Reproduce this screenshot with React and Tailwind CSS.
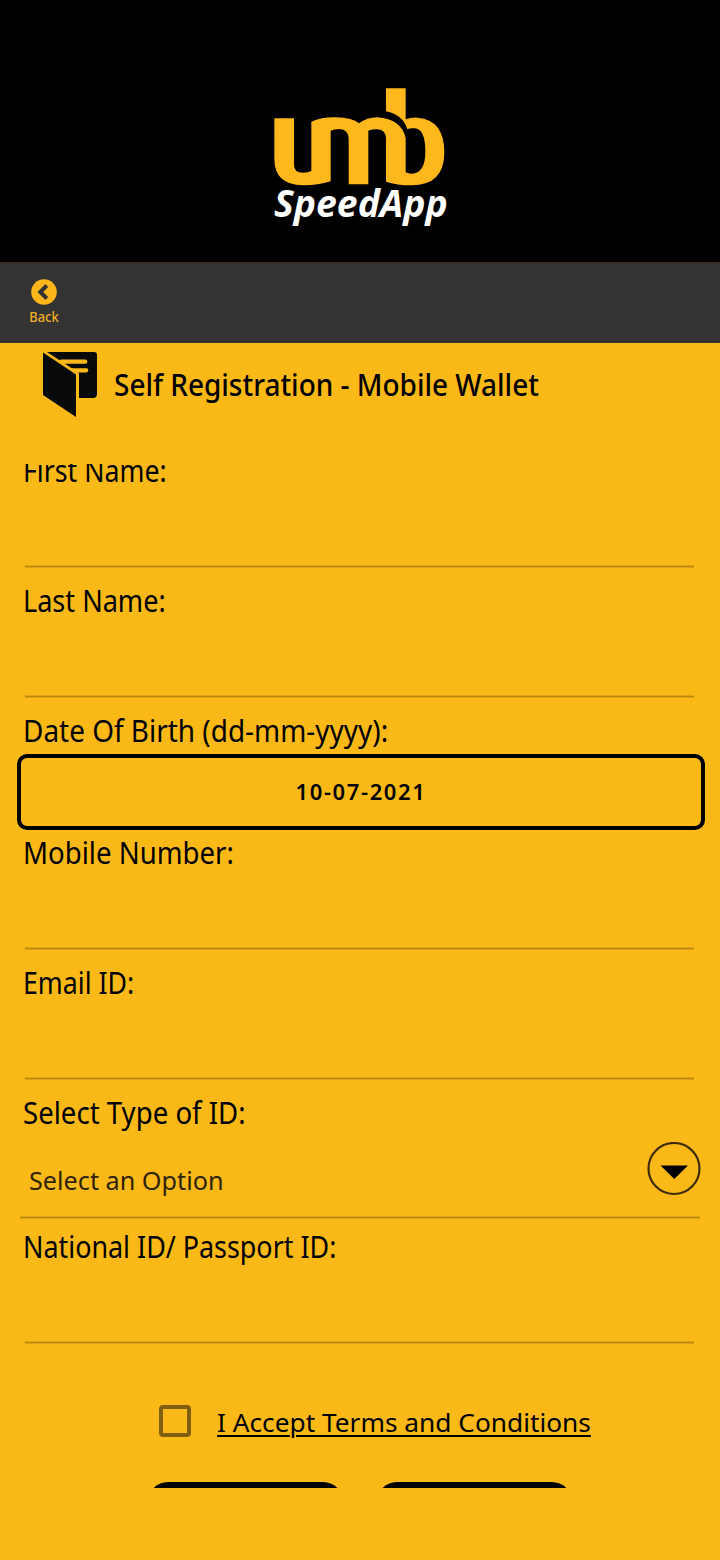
import React from "react";

function Rule({ className = "" }) {
  return <div className={`h-[3px] shrink-0 border-y border-[#dea416] bg-[#b5850e] ${className}`} />;
}

function Label({ children, scale = "scale-x-[0.92]" }) {
  return (
    <div className="flex h-10 shrink-0 pl-[23px] pt-px text-[30px] leading-10 text-black">
      <span className={`origin-left whitespace-nowrap ${scale}`}>{children}</span>
    </div>
  );
}

function Field({ label, scale }) {
  return (
    <div className="flex h-[130px] shrink-0 flex-col pb-3">
      <Label scale={scale}>{label}</Label>
      <div className="flex-1" />
      <Rule className="ml-[25px] mr-[26px]" />
    </div>
  );
}

function BrandMark() {
  return (
    <svg width="172" height="99" viewBox="42 37 516 297" fill="#ffb81c" className="block" aria-hidden="true">
      <path d="M43 128H102V268Q102 291 128 291Q145 291 154 286V138Q185 124 228 125Q278 126 297 143Q320 125 352 125Q425 130 437 188V290Q445 294 455 294Q496 292 496 228Q496 160 464 158Q452 157 442 160Q427 116 378 107V38H437V131Q453 125 473 126Q553 133 553 230Q553 329 455 329Q410 329 378 318V190Q378 161 350 161Q335 161 325 165V326H266V190Q266 161 238 160Q222 160 212 165V317Q170 330 128 329Q43 327 43 250Z" />
    </svg>
  );
}

export default function App() {
  return (
    <div className="flex h-[1560px] w-[720px] flex-col overflow-hidden bg-[#fbb918] font-['Noto_Sans',sans-serif] text-black">
      <header className="flex h-[262px] shrink-0 flex-col items-start bg-black pl-[274px] pt-[88px]">
        <BrandMark />
        <div className="-mt-[7px] origin-left scale-x-[1.01] whitespace-nowrap text-[37px] font-bold italic leading-[46px] text-white">
          SpeedApp
        </div>
      </header>

      <nav className="flex h-[81px] shrink-0 border-t border-[#3b2d10] bg-[#333333] pl-[26px] pt-4">
        <button className="flex w-9 flex-col items-center">
          <svg width="26" height="26" viewBox="0 0 26 26" className="block shrink-0">
            <circle cx="13" cy="13" r="12.8" fill="#fdb71c" />
            <path d="M15.8 6.500 9.300 13l6.500 6.500" fill="none" stroke="#333" strokeWidth="4" />
          </svg>
          <span className="mt-[2px] scale-x-[0.92] text-sm font-medium leading-5 text-[#f3b121]">Back</span>
        </button>
      </nav>

      <div className="flex h-[121px] shrink-0 items-start pl-[43px] pt-2">
        <svg width="55" height="67" viewBox="0 0 55 67" fill="#080a09" className="block shrink-0">
          <path d="M3.500 1H51Q54 1 54 4V43Q54 47 50 47H36V22L4 1Z" />
          <path d="M18 10.700H42.200M27 19.300H43.200" stroke="#fbb918" strokeWidth="4.300" strokeLinecap="round" />
          <path d="M0 1.500 34.500 24V67L0 44Z" stroke="#fbb918" strokeWidth="3" />
          <path d="M0 1.500 33 23.500V66L0 44Z" />
        </svg>
        <h1 className="ml-4 mt-3 origin-left scale-x-[0.902] whitespace-nowrap text-[31px] font-medium leading-[42px]">
          Self Registration - Mobile Wallet
        </h1>
      </div>

      <main className="h-[1024px] shrink-0 overflow-hidden">
        <div className="-mt-3.5 flex flex-col">
          <Field label="First Name:" scale="scale-x-[0.89]" />
          <Field label="Last Name:" scale="scale-x-[0.902]" />
          <Label scale="scale-x-[0.931]">Date Of Birth (dd-mm-yyyy):</Label>
          <div className="mb-0.5 ml-[17px] mr-[15px] mt-1 flex h-[76px] items-center justify-center rounded-[10px] border-4 border-black pb-px text-[22px] font-semibold tracking-[1.600px]">
            10-07-2021
          </div>
          <Field label="Mobile Number:" />
          <Field label="Email ID:" scale="scale-x-[0.89]" />
          <Label>Select Type of ID:</Label>
          <div className="flex h-[84px] justify-between pl-[29px] pr-[19px]">
            <span className="mt-7 origin-left scale-x-[0.97] text-[26px] leading-10 text-[#2f230a]">Select an Option</span>
            <svg width="54" height="54" viewBox="0 0 54 54" className="mt-2.5 block">
              <circle cx="27" cy="26.500" r="25.500" fill="none" stroke="#3d2d0a" strokeWidth="2.200" />
              <path d="M13.500 23.500H41L27.300 37Z" fill="#000" />
            </svg>
          </div>
          <Rule className="mb-[7px] ml-5 mr-5" />
          <Field label="National ID/ Passport ID:" scale="scale-x-[0.896]" />
          <div className="mt-[49px] flex h-8 items-center pl-[159px]">
            <span className="h-8 w-8 shrink-0 rounded-[4px] border-4 border-[#805f0c]" />
            <a className="ml-[26px] mt-0.5 origin-left scale-x-[1.01] whitespace-nowrap text-[26px] leading-9 underline decoration-[1.500px] underline-offset-[3px]">
              I Accept Terms and Conditions
            </a>
          </div>
          <div className="mt-[45px] flex gap-[34px] pl-[148px]">
            <button className="h-16 w-[195px] rounded-[20px] bg-black" />
            <button className="h-16 w-[195px] rounded-[20px] bg-black" />
          </div>
        </div>
      </main>
    </div>
  );
}
